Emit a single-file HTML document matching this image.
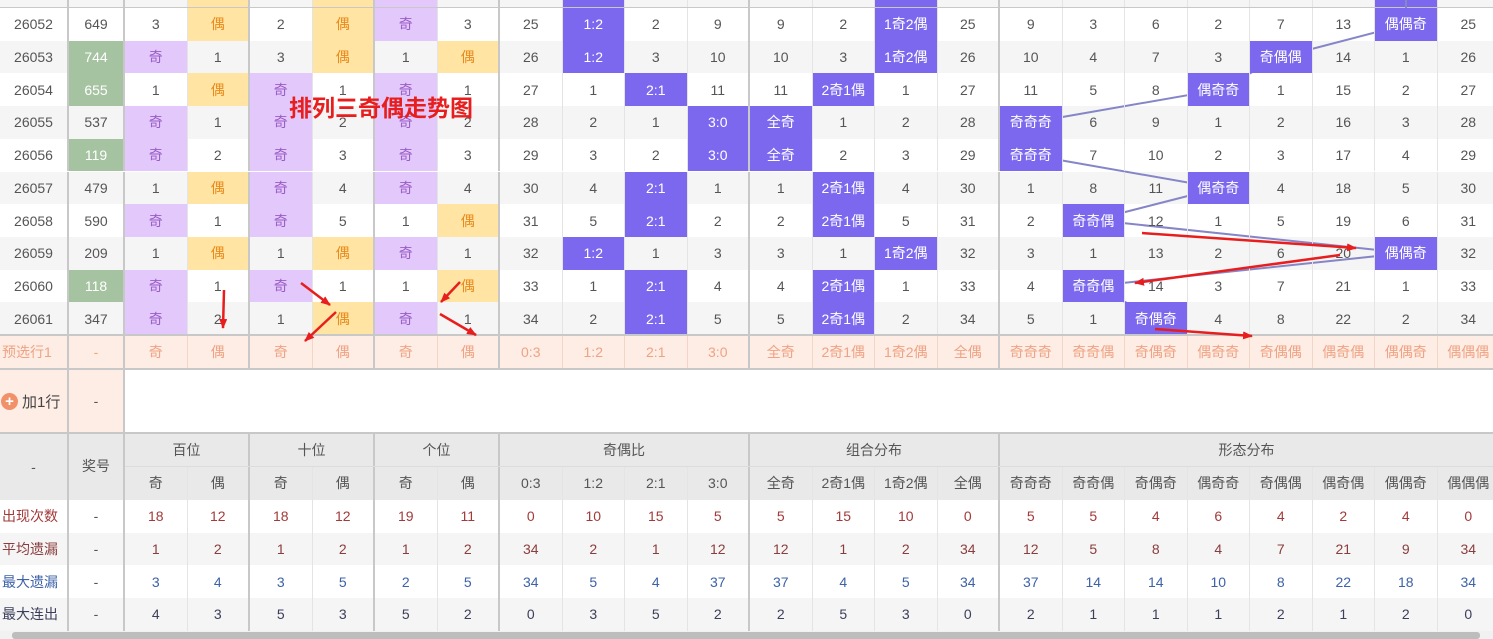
<!DOCTYPE html>
<html><head><meta charset="utf-8">
<style>
*{box-sizing:border-box;margin:0;padding:0}
body{width:1493px;height:639px;overflow:hidden;background:#fff;position:relative;font-family:"Liberation Sans","Noto Sans CJK SC",sans-serif;font-size:14px;color:#555}
.r{position:absolute;left:0;display:grid;grid-template-columns:69px 56px repeat(22,62.5px);height:32.7px}
.r>div{display:flex;align-items:center;justify-content:center;border-right:1px solid #e4e4e4;white-space:nowrap;overflow:hidden}
.r>div:nth-child(1),.r>div:nth-child(2),.r>div:nth-child(4),.r>div:nth-child(6),.r>div:nth-child(8),.r>div:nth-child(12),.r>div:nth-child(16){border-right:2px solid #c8c8c8}
.w{background:#fff}.gr{background:#f5f5f5}
.st{position:absolute;left:0;width:1493px;height:32.7px}
.q{background:#e3c9fb!important;color:#9a5cc6}
.o{background:#ffe4a3!important;color:#e98a1c}
.b{background:#7b68ee!important;color:#fff}
.g{background:#a6c3a1!important;color:#fff}
.pre{background:#fdede5;color:#f0a283}
.pre>div{border-right-color:#f3d6c8}
.hl{position:absolute;left:0;width:1493px;height:2px;background:#c8c8c8}
.lab{justify-content:flex-start!important;padding-left:2px}
.hd{position:absolute;background:#e9e9e9;color:#555;display:flex;align-items:center;justify-content:center;border-right:2px solid #c8c8c8}
.c1{color:#a33a3a}.c2{color:#8a3d3d}.c3{color:#3d62a8}.c4{color:#3b3f5a}
</style></head><body>

<div class="r gr" style="top:-24.7px"><div></div><div></div><div></div><div class="o"></div><div></div><div class="o"></div><div class="q"></div><div></div><div></div><div class="b"></div><div></div><div></div><div></div><div></div><div class="b"></div><div></div><div></div><div></div><div></div><div></div><div></div><div></div><div class="b"></div><div></div></div>
<div class="hl" style="top:7px"></div>

<div class="st w" style="top:8px"></div>
<div class="st gr" style="top:40.7px"></div>
<div class="st w" style="top:73.4px"></div>
<div class="st gr" style="top:106.1px"></div>
<div class="st w" style="top:138.8px"></div>
<div class="st gr" style="top:171.5px"></div>
<div class="st w" style="top:204.2px"></div>
<div class="st gr" style="top:236.9px"></div>
<div class="st w" style="top:269.6px"></div>
<div class="st gr" style="top:302.3px"></div>

<svg style="position:absolute;left:0;top:0" width="1493" height="639">
<polyline fill="none" stroke="#8585c8" stroke-width="2" points="1406,24.4 1281,57 1219,89.7 1031,122.5 1031,155 1219,188 1094,220 1406,253 1094,286 1156,318"/>
<line x1="1406" y1="0" x2="1406" y2="24" stroke="#8585c8" stroke-width="2"/>
</svg>

<div class="r" style="top:8px"><div>26052</div><div>649</div><div>3</div><div class="o">偶</div><div>2</div><div class="o">偶</div><div class="q">奇</div><div>3</div><div>25</div><div class="b">1:2</div><div>2</div><div>9</div><div>9</div><div>2</div><div class="b">1奇2偶</div><div>25</div><div>9</div><div>3</div><div>6</div><div>2</div><div>7</div><div>13</div><div class="b">偶偶奇</div><div>25</div></div>
<div class="r" style="top:40.7px"><div>26053</div><div class="g">744</div><div class="q">奇</div><div>1</div><div>3</div><div class="o">偶</div><div>1</div><div class="o">偶</div><div>26</div><div class="b">1:2</div><div>3</div><div>10</div><div>10</div><div>3</div><div class="b">1奇2偶</div><div>26</div><div>10</div><div>4</div><div>7</div><div>3</div><div class="b">奇偶偶</div><div>14</div><div>1</div><div>26</div></div>
<div class="r" style="top:73.4px"><div>26054</div><div class="g">655</div><div>1</div><div class="o">偶</div><div class="q">奇</div><div>1</div><div class="q">奇</div><div>1</div><div>27</div><div>1</div><div class="b">2:1</div><div>11</div><div>11</div><div class="b">2奇1偶</div><div>1</div><div>27</div><div>11</div><div>5</div><div>8</div><div class="b">偶奇奇</div><div>1</div><div>15</div><div>2</div><div>27</div></div>
<div class="r" style="top:106.1px"><div>26055</div><div>537</div><div class="q">奇</div><div>1</div><div class="q">奇</div><div>2</div><div class="q">奇</div><div>2</div><div>28</div><div>2</div><div>1</div><div class="b">3:0</div><div class="b">全奇</div><div>1</div><div>2</div><div>28</div><div class="b">奇奇奇</div><div>6</div><div>9</div><div>1</div><div>2</div><div>16</div><div>3</div><div>28</div></div>
<div class="r" style="top:138.8px"><div>26056</div><div class="g">119</div><div class="q">奇</div><div>2</div><div class="q">奇</div><div>3</div><div class="q">奇</div><div>3</div><div>29</div><div>3</div><div>2</div><div class="b">3:0</div><div class="b">全奇</div><div>2</div><div>3</div><div>29</div><div class="b">奇奇奇</div><div>7</div><div>10</div><div>2</div><div>3</div><div>17</div><div>4</div><div>29</div></div>
<div class="r" style="top:171.5px"><div>26057</div><div>479</div><div>1</div><div class="o">偶</div><div class="q">奇</div><div>4</div><div class="q">奇</div><div>4</div><div>30</div><div>4</div><div class="b">2:1</div><div>1</div><div>1</div><div class="b">2奇1偶</div><div>4</div><div>30</div><div>1</div><div>8</div><div>11</div><div class="b">偶奇奇</div><div>4</div><div>18</div><div>5</div><div>30</div></div>
<div class="r" style="top:204.2px"><div>26058</div><div>590</div><div class="q">奇</div><div>1</div><div class="q">奇</div><div>5</div><div>1</div><div class="o">偶</div><div>31</div><div>5</div><div class="b">2:1</div><div>2</div><div>2</div><div class="b">2奇1偶</div><div>5</div><div>31</div><div>2</div><div class="b">奇奇偶</div><div>12</div><div>1</div><div>5</div><div>19</div><div>6</div><div>31</div></div>
<div class="r" style="top:236.9px"><div>26059</div><div>209</div><div>1</div><div class="o">偶</div><div>1</div><div class="o">偶</div><div class="q">奇</div><div>1</div><div>32</div><div class="b">1:2</div><div>1</div><div>3</div><div>3</div><div>1</div><div class="b">1奇2偶</div><div>32</div><div>3</div><div>1</div><div>13</div><div>2</div><div>6</div><div>20</div><div class="b">偶偶奇</div><div>32</div></div>
<div class="r" style="top:269.6px"><div>26060</div><div class="g">118</div><div class="q">奇</div><div>1</div><div class="q">奇</div><div>1</div><div>1</div><div class="o">偶</div><div>33</div><div>1</div><div class="b">2:1</div><div>4</div><div>4</div><div class="b">2奇1偶</div><div>1</div><div>33</div><div>4</div><div class="b">奇奇偶</div><div>14</div><div>3</div><div>7</div><div>21</div><div>1</div><div>33</div></div>
<div class="r" style="top:302.3px"><div>26061</div><div>347</div><div class="q">奇</div><div>2</div><div>1</div><div class="o">偶</div><div class="q">奇</div><div>1</div><div>34</div><div>2</div><div class="b">2:1</div><div>5</div><div>5</div><div class="b">2奇1偶</div><div>2</div><div>34</div><div>5</div><div>1</div><div class="b">奇偶奇</div><div>4</div><div>8</div><div>22</div><div>2</div><div>34</div></div>
<div class="hl" style="top:334px"></div>
<div class="r pre" style="top:336px"><div class="lab">预选行1</div><div>-</div><div>奇</div><div>偶</div><div>奇</div><div>偶</div><div>奇</div><div>偶</div><div>0:3</div><div>1:2</div><div>2:1</div><div>3:0</div><div>全奇</div><div>2奇1偶</div><div>1奇2偶</div><div>全偶</div><div>奇奇奇</div><div>奇奇偶</div><div>奇偶奇</div><div>偶奇奇</div><div>奇偶偶</div><div>偶奇偶</div><div>偶偶奇</div><div>偶偶偶</div></div>
<div class="hl" style="top:368px"></div>

<div style="position:absolute;left:0;top:370px;width:69px;height:62px;background:#fdede5;border-right:2px solid #c8c8c8;display:flex;align-items:center;color:#444;font-size:15px"><span style="display:inline-block;width:17px;height:17px;border-radius:50%;background:#f0916a;color:#fff;font-size:15px;line-height:17px;text-align:center;margin:0 4px 0 1px;font-weight:bold">+</span>加1行</div>
<div style="position:absolute;left:69px;top:370px;width:56px;height:62px;background:#fdede5;border-right:2px solid #c8c8c8;display:flex;align-items:center;justify-content:center">-</div>
<div class="hl" style="top:432px"></div>

<div class="r" style="top:466px;height:34px;background:#e9e9e9"><div style="border:none"></div><div style="border:none"></div><div>奇</div><div>偶</div><div>奇</div><div>偶</div><div>奇</div><div>偶</div><div>0:3</div><div>1:2</div><div>2:1</div><div>3:0</div><div>全奇</div><div>2奇1偶</div><div>1奇2偶</div><div>全偶</div><div>奇奇奇</div><div>奇奇偶</div><div>奇偶奇</div><div>偶奇奇</div><div>奇偶偶</div><div>偶奇偶</div><div>偶偶奇</div><div>偶偶偶</div></div>
<div style="position:absolute;left:125px;top:466px;width:1368px;height:1px;background:#dcdcdc"></div>
<div class="hd" style="left:0;top:434px;width:69px;height:66px">-</div>
<div class="hd" style="left:69px;top:434px;width:56px;height:66px;padding-bottom:2px">奖号</div>
<div class="hd" style="left:125px;top:434px;width:125px;height:32px">百位</div>
<div class="hd" style="left:250px;top:434px;width:125px;height:32px">十位</div>
<div class="hd" style="left:375px;top:434px;width:125px;height:32px">个位</div>
<div class="hd" style="left:500px;top:434px;width:250px;height:32px">奇偶比</div>
<div class="hd" style="left:750px;top:434px;width:250px;height:32px">组合分布</div>
<div class="hd" style="left:1000px;top:434px;width:493px;height:32px;border-right:none">形态分布</div>

<div class="r w c1" style="top:500px"><div class="lab">出现次数</div><div style="color:#555">-</div><div>18</div><div>12</div><div>18</div><div>12</div><div>19</div><div>11</div><div>0</div><div>10</div><div>15</div><div>5</div><div>5</div><div>15</div><div>10</div><div>0</div><div>5</div><div>5</div><div>4</div><div>6</div><div>4</div><div>2</div><div>4</div><div>0</div></div>
<div class="r gr c2" style="top:532.7px"><div class="lab">平均遗漏</div><div style="color:#555">-</div><div>1</div><div>2</div><div>1</div><div>2</div><div>1</div><div>2</div><div>34</div><div>2</div><div>1</div><div>12</div><div>12</div><div>1</div><div>2</div><div>34</div><div>12</div><div>5</div><div>8</div><div>4</div><div>7</div><div>21</div><div>9</div><div>34</div></div>
<div class="r w c3" style="top:565.4px"><div class="lab">最大遗漏</div><div style="color:#555">-</div><div>3</div><div>4</div><div>3</div><div>5</div><div>2</div><div>5</div><div>34</div><div>5</div><div>4</div><div>37</div><div>37</div><div>4</div><div>5</div><div>34</div><div>37</div><div>14</div><div>14</div><div>10</div><div>8</div><div>22</div><div>18</div><div>34</div></div>
<div class="r gr c4" style="top:598.1px"><div class="lab">最大连出</div><div style="color:#555">-</div><div>4</div><div>3</div><div>5</div><div>3</div><div>5</div><div>2</div><div>0</div><div>3</div><div>5</div><div>2</div><div>2</div><div>5</div><div>3</div><div>0</div><div>2</div><div>1</div><div>1</div><div>1</div><div>2</div><div>1</div><div>2</div><div>0</div></div>

<div style="position:absolute;left:0;top:631px;width:1493px;height:8px;background:#f1f1f1"></div>
<div style="position:absolute;left:12px;top:632px;width:1468px;height:7px;background:#bdbdbd;border-radius:3px"></div>

<div style="position:absolute;left:289px;top:89px;color:#e81e1e;font-size:23px;font-weight:bold;font-family:'Noto Sans CJK SC',sans-serif">排列三奇偶走势图</div>

<svg style="position:absolute;left:0;top:0" width="1493" height="639">
<defs><marker id="a" markerWidth="10" markerHeight="8" refX="9" refY="4" orient="auto" markerUnits="userSpaceOnUse"><polygon points="0,0 10,4 0,8" fill="#e81e1e"/></marker></defs>
<g stroke="#e81e1e" stroke-width="2.5" marker-end="url(#a)">
<line x1="224" y1="290" x2="223" y2="328"/>
<line x1="301" y1="283" x2="330" y2="305"/>
<line x1="336" y1="312" x2="305" y2="341"/>
<line x1="460" y1="282" x2="441" y2="302"/>
<line x1="440" y1="314" x2="476" y2="335"/>
<line x1="1142" y1="233" x2="1356" y2="248"/>
<line x1="1340" y1="255" x2="1135" y2="283"/>
<line x1="1155" y1="329" x2="1252" y2="336"/>
</g>
</svg>
</body></html>
